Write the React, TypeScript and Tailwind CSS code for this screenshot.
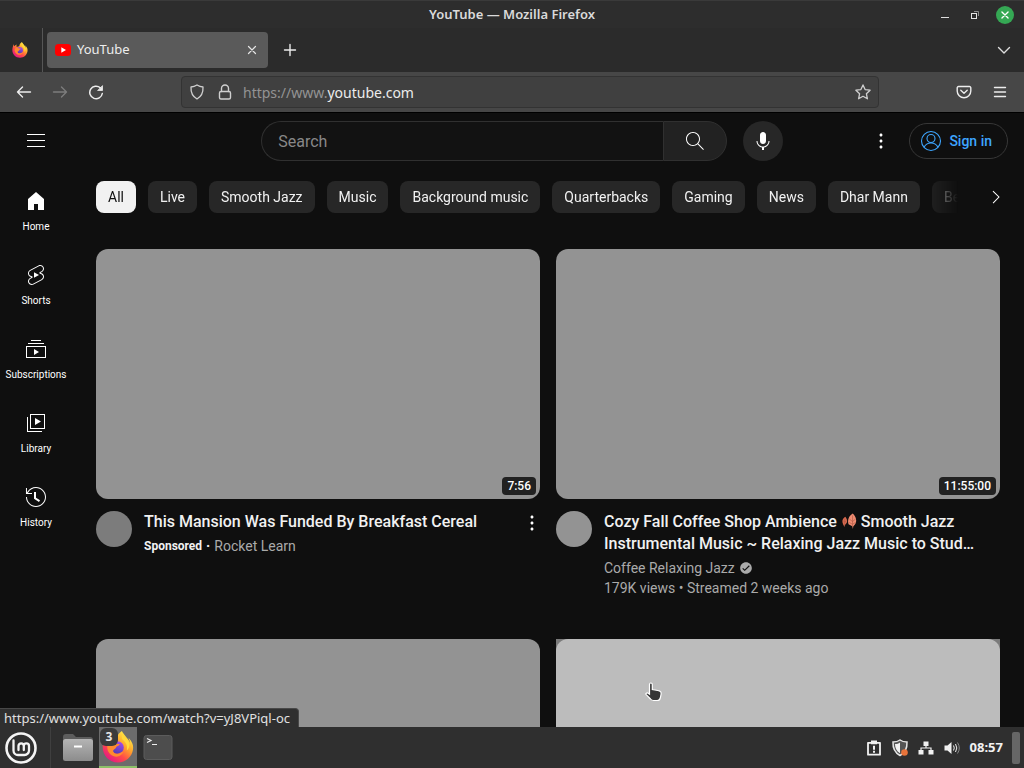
import type { ReactNode } from 'react';

const chips = ['All', 'Live', 'Smooth Jazz', 'Music', 'Background music', 'Quarterbacks', 'Gaming', 'News', 'Dhar Mann', 'Be'];

const navItems = [
  { label: 'Home', d: 'M4 21V10.08l8-6.96 8 6.96V21h-6v-6h-4v6H4z' },
  {
    label: 'Shorts',
    d: 'M10 14.65v-5.3L15 12l-5 2.65zm7.77-4.33c-.77-.32-1.2-.5-1.2-.5L18 9.06c1.84-.96 2.53-3.23 1.56-5.06s-3.24-2.53-5.07-1.56L6 6.94c-1.29.68-2.07 2.04-2 3.49.07 1.42.93 2.67 2.22 3.25.03.01 1.2.5 1.2.5L6 14.93c-1.83.97-2.53 3.24-1.56 5.07.97 1.83 3.24 2.53 5.07 1.56l8.5-4.5c1.29-.68 2.06-2.04 1.99-3.49-.07-1.42-.94-2.68-2.23-3.25zm-.23 5.86l-8.5 4.5c-1.34.71-3.01.2-3.72-1.14-.71-1.34-.2-3.01 1.14-3.72l2.04-1.08v-1.21l-.69-.28-1.11-.46c-.99-.41-1.65-1.35-1.7-2.41-.05-1.06.52-2.06 1.46-2.56l8.5-4.5c1.34-.71 3.01-.2 3.72 1.14.71 1.34.2 3.01-1.14 3.72L15.5 9.26v1.21l1.8.74c.99.41 1.65 1.35 1.7 2.41.05 1.06-.52 2.06-1.46 2.56z',
  },
  { label: 'Subscriptions', d: 'M10 18v-6l5 3-5 3zm7-15H7v1h10V3zm3 3H4v1h16V6zm2 3H2v12h20V9zM3 10h18v10H3V10z' },
  { label: 'Library', d: 'M11 7l6 3.5L11 14V7zm7 13H4V6H3v15h15v-1zm3-2H6V3h15v15zM7 17h13V4H7v13z' },
  {
    label: 'History',
    d: 'M14.97 16.95L10 13.87V7h2v5.76l4.03 2.49-1.06 1.7zM22 12c0 5.51-4.49 10-10 10S2 17.51 2 12h1c0 4.96 4.04 9 9 9s9-4.04 9-9-4.04-9-9-9C8.81 3 5.92 4.64 4.28 7.38c-.11.18-.22.37-.31.56L3.94 8H8v1H1.96V3h1v4.74c.04-.09.07-.17.11-.25.11-.22.23-.42.35-.63C5.22 3.86 8.51 2 12 2c5.51 0 10 4.49 10 10z',
  },
];

const kebab =
  'M12 16.5c.83 0 1.5.67 1.5 1.5s-.67 1.5-1.5 1.5-1.5-.67-1.5-1.5.67-1.5 1.5-1.5zM10.5 12c0 .83.67 1.5 1.5 1.5s1.5-.67 1.5-1.5-.67-1.5-1.5-1.5-1.5.67-1.5 1.5zm0-6c0 .83.67 1.5 1.5 1.5s1.5-.67 1.5-1.5-.67-1.5-1.5-1.5-1.5.67-1.5 1.5z';

function Glyph({ d, className = 'size-6' }: { d: string; className?: string }) {
  return (
    <svg viewBox="0 0 24 24" fill="currentColor" className={className} aria-hidden="true">
      <path d={d} />
    </svg>
  );
}

function Line({ children, className = 'size-4', width = 1.4 }: { children: ReactNode; className?: string; width?: number }) {
  return (
    <svg
      viewBox="0 0 16 16"
      fill="none"
      stroke="currentColor"
      strokeWidth={width}
      strokeLinecap="round"
      strokeLinejoin="round"
      className={className}
      aria-hidden="true"
    >
      {children}
    </svg>
  );
}

function FirefoxLogo({ className, id }: { className: string; id: string }) {
  return (
    <svg viewBox="0 0 32 32" className={className} aria-hidden="true">
      <defs>
        <linearGradient id={id + 'a'} x1="0.85" y1="0.1" x2="0.2" y2="0.95">
          <stop offset="0" stopColor="#fff04a" />
          <stop offset="0.35" stopColor="#ffa62b" />
          <stop offset="0.65" stopColor="#ff4b48" />
          <stop offset="1" stopColor="#e31587" />
        </linearGradient>
        <linearGradient id={id + 'b'} x1="0.7" y1="0" x2="0.3" y2="1">
          <stop offset="0" stopColor="#a64be8" />
          <stop offset="1" stopColor="#4c3bb5" />
        </linearGradient>
      </defs>
      <path
        d="M29.6 11.1c-.7-1.7-2.1-3.5-3.2-4.1.9 1.8 1.4 3.5 1.6 4.8C26.200 7.300 23.100 5.500 20.700 1.600 20.200.8 20 .2 19.900 0c-3.800 2.200-5.200 6.300-5.300 8.300-1.800.1-3.500.8-4.900 1.900-.7-.8-1-3-.3-5.200-2 .9-3.600 2.400-4.700 3.700-.8-1-.7-4.200-.7-4.200C3.300 5 .9 9.400.7 15.500.5 24.500 7.300 31.500 16 31.500c7.800 0 13.900-5.600 15-13 .4-2.600 0-5.200-1.400-7.400z"
        fill={'url(#' + id + 'a)'}
      />
      <circle cx="15.500" cy="16.500" r="6.300" fill={'url(#' + id + 'b)'} />
      <path
        d="M5.500 14c2.500-3 5-3.300 7.500-1.700 1.600.9 3.300.6 4.500.8.500 1.600-2.900 2-3.300 3.200-.4 1.800-2.500 1.900-3 3.200-.4 1.900 2.300 3.700 4.600 3.200 2.600-.5 4-2.100 5.700-1.900-1.600 4.100-6.300 6.100-10.300 4.200C7 23.100 4.500 19 5.500 14z"
        fill="#ff8a2e"
      />
      <path d="M20.500 8.500c3.800 2.800 5.400 7 4.300 11 2.100-1.500 3-4.500 2.400-7.500-1-3.500-4.300-6-6.700-9.500-1 2-.9 4.300 0 6z" fill="#ffd93b" />
    </svg>
  );
}

function FallenLeaves() {
  return (
    <svg viewBox="0 0 17 18" className="inline-block h-[18px] w-4 align-[-3px]" role="img" aria-label="fallen leaves">
      <path d="M4.500 4.500C1.500 6.500.7 9 2.200 12.500l1.500 3 .4-2.500C7 11.500 7.600 8 4.500 4.500z" fill="#d9694e" />
      <path d="M12.500 1C8.500 3.500 6.500 7.500 8 12.500l4 2 .6 3 .5-3C17 12 17.500 5.500 12.500 1z" fill="#ef8c72" />
      <path d="M12.300 3v12M9 7l3.200 2.500L15.500 7M8.800 10.500l3.400 2 3.300-2M4 6.500v7M2.300 8.500 4 10.200l1.600-1.500" stroke="#a95441" strokeWidth=".6" fill="none" />
    </svg>
  );
}

function TitleBar() {
  return (
    <header className="grid h-7 shrink-0 grid-cols-[1fr_auto_1fr] items-center border-t border-[#3a3a3a] bg-[#2d2d2d]">
      <h1 className="col-start-2 text-[13px] font-semibold text-[#dadada]">YouTube — Mozilla Firefox</h1>
      <div className="flex items-center justify-end gap-3 pr-[10px]">
        <button aria-label="Minimize" className="grid size-[18px] place-items-center">
          <svg viewBox="0 0 18 18" className="size-[18px]" aria-hidden="true"><path d="M5 11.500h8" stroke="#ddd" /></svg>
        </button>
        <button aria-label="Restore" className="grid size-[18px] place-items-center">
          <svg viewBox="0 0 18 18" fill="none" className="size-[18px]" aria-hidden="true">
            <rect x="5.500" y="7.500" width="5" height="5" stroke="#e4e4e4" />
            <path d="M8 5.500h4.500V10" stroke="#8b8b8b" />
          </svg>
        </button>
        <button aria-label="Close window" className="grid size-[18px] place-items-center rounded-full bg-[#35a854] text-white">
          <Line className="size-[14px]" width={1.5}><path d="M4.500 4.500l7 7M11.500 4.500l-7 7" /></Line>
        </button>
      </div>
    </header>
  );
}

function TabStrip() {
  return (
    <div className="flex h-11 shrink-0 items-center bg-[#2b2b2b] pr-3">
      <button aria-label="Firefox View" className="grid w-[42px] place-items-center pr-[2px]">
        <FirefoxLogo className="size-4" id="view" />
      </button>
      <div className="h-full border-l border-[#565656]" />
      <div className="ml-1 flex h-9 w-[221px] items-center gap-[6px] rounded bg-[#5a5a5a] px-2">
        <svg viewBox="0 0 16 16" className="size-4" aria-hidden="true">
          <rect x="0" y="2" width="16" height="12" rx="3.500" fill="#f00" />
          <path d="M6.300 5.300v5.400L11 8z" fill="#fff" />
        </svg>
        <span className="flex-1 text-[13px] text-[#ededed]">YouTube</span>
        <button aria-label="Close tab" className="text-[#e4e4e4]">
          <Line width={1.2}><path d="M4.500 4.500l7 7M11.500 4.500l-7 7" /></Line>
        </button>
      </div>
      <button aria-label="New tab" className="ml-[14px] text-[#ececec]">
        <Line width={1.4}><path d="M8 2.500v11M2.500 8h11" /></Line>
      </button>
      <button aria-label="List all tabs" className="ml-auto text-[#dedede]">
        <Line width={1.4}><path d="M2.500 5.500L8 11l5.500-5.500" /></Line>
      </button>
    </div>
  );
}

function NavBar() {
  return (
    <div className="flex h-10 shrink-0 items-center bg-[#474747] px-4 text-[#ededed]">
      <div className="flex w-[165px] shrink-0 gap-5">
        <button aria-label="Back"><Line><path d="M14.500 8h-13M6.500 3L1.500 8l5 5" /></Line></button>
        <button aria-label="Forward" className="text-[#7d7d7d]"><Line><path d="M1.500 8h13M9.500 3l5 5-5 5" /></Line></button>
        <button aria-label="Reload">
          <Line width={1.5}><path d="M14.300 9.500A6.300 6.300 0 1 1 12.300 3.800" /><path d="M14.500 2v4.500H10z" fill="currentColor" strokeWidth="0.800" /></Line>
        </button>
      </div>
      <div className="flex h-8 min-w-0 flex-1 items-center rounded border border-[#333] bg-[#404040] px-[7px] text-[#cfcfcf]">
        <Line width={1.3}><path d="M8 1c2 1.300 4 1.900 6 2 .3 5.300-1.600 9.500-6 12C3.600 12.500 1.700 8.300 2 3c2-.1 4-.7 6-2z" /></Line>
        <span className="ml-3">
          <Line width={1.4}><rect x="2.500" y="7.500" width="11" height="7.500" rx="1.500" /><path d="M4.500 7.500V4.500a3.500 3.500 0 0 1 7 0v3" /></Line>
        </span>
        <label htmlFor="address" className="ml-[10px] text-[14px] text-[#939393]">https://www.</label>
        <input id="address" aria-label="Address" defaultValue="youtube.com" className="min-w-0 flex-1 bg-transparent text-[14px] text-[#ececec] outline-none" />
        <button aria-label="Bookmark this page">
          <Line width={1.3}><path d="M8 .9l2.100 4.700 5 .6-3.700 3.500 1 5.100L8 12.300l-4.400 2.500 1-5.100L.9 6.200l5-.6z" /></Line>
        </button>
      </div>
      <div className="ml-[77px] flex gap-5">
        <button aria-label="Save to Pocket">
          <Line width={1.4}><path d="M2.500 2.500h11a1.300 1.300 0 0 1 1.300 1.300V7a6.800 6.800 0 0 1-13.600 0V3.800a1.300 1.300 0 0 1 1.300-1.300z" /><path d="M4.800 6.200L8 9.200l3.200-3" /></Line>
        </button>
        <button aria-label="Open application menu">
          <Line width={1.4}><path d="M2.500 3.500h11M2.500 8h11M2.500 12.500h11" /></Line>
        </button>
      </div>
    </div>
  );
}

function Masthead() {
  return (
    <div className="flex h-14 shrink-0 items-center justify-between px-4">
      <div className="w-[167px] shrink-0">
        <button aria-label="Guide" className="grid size-10 place-items-center">
          <Glyph d="M21 6H3V5h18v1zm0 5H3v1h18v-1zm0 6H3v1h18v-1z" />
        </button>
      </div>
      <div className="flex min-w-0 flex-[0_1_522px] items-center gap-4">
        <form className="flex h-10 min-w-0 flex-1" onSubmit={(e) => e.preventDefault()}>
          <input type="text" aria-label="Search" placeholder="Search" className="min-w-0 flex-1 rounded-l-full border border-r-0 border-[#303030] bg-[#121212] px-4 pt-px text-base text-white outline-none placeholder:text-[#888]" />
          <button aria-label="Submit search" className="grid w-16 place-items-center rounded-r-full border border-[#303030] bg-[#222]">
            <Glyph d="M20.870 20.170l-5.590-5.590C16.350 13.350 17 11.750 17 10c0-3.870-3.130-7-7-7s-7 3.130-7 7 3.130 7 7 7c1.750 0 3.350-.65 4.580-1.710l5.590 5.590.7-.71zM10 16c-3.310 0-6-2.690-6-6s2.690-6 6-6 6 2.690 6 6-2.690 6-6 6z" />
          </button>
        </form>
        <button aria-label="Search with your voice" className="grid size-10 place-items-center rounded-full bg-[#272727]">
          <Glyph d="M12 3C10.340 3 9 4.370 9 6.070v5.860C9 13.630 10.340 15 12 15s3-1.370 3-3.070V6.070C15 4.370 13.660 3 12 3zM18.500 12h-1c0 3.030-2.470 5.500-5.500 5.500S6.500 15.030 6.500 12h-1c0 3.240 2.390 5.930 5.500 6.410V21h2v-2.590c3.110-.48 5.500-3.170 5.500-6.410z" />
        </button>
      </div>
      <div className="flex shrink-0 items-center gap-2">
        <button aria-label="Settings" className="grid size-10 place-items-center"><Glyph d={kebab} /></button>
        <a href="#signin" className="flex h-9 items-center gap-[6px] rounded-full border border-[#373737] pr-[15px] pl-[9px] text-sm font-medium text-[#3ea6ff]">
          <svg viewBox="0 0 24 24" fill="none" stroke="currentColor" strokeWidth="1.100" className="size-6" aria-hidden="true">
            <circle cx="12" cy="12" r="9.500" />
            <circle cx="12" cy="9.500" r="4" />
            <path d="M5 18.500c1.300-3 4-4.500 7-4.500s5.700 1.500 7 4.500" />
          </svg>
          Sign in
        </a>
      </div>
    </div>
  );
}

function ChipBar() {
  return (
    <div className="flex h-14 shrink-0 items-center pr-3">
      <div className="flex min-w-0 flex-1 gap-3 overflow-hidden [mask-image:linear-gradient(to_right,#000_calc(100%-40px),transparent_calc(100%-2px))]">
        {chips.map((chip, i) => (
          <button
            key={chip}
            className={
              i === 0
                ? 'h-8 shrink-0 rounded-lg bg-[#f1f1f1] px-3 text-sm text-[#0f0f0f]'
                : 'h-8 shrink-0 rounded-lg bg-[#272727] px-3 text-sm text-[#f1f1f1]'
            }
          >
            {chip}
          </button>
        ))}
      </div>
      <button aria-label="Next" className="ml-5 grid size-8 place-items-center">
        <Glyph d="M9.400 18.400l-.7-.7 5.600-5.600-5.700-5.700.7-.7 6.400 6.400-6.300 6.300z" />
      </button>
    </div>
  );
}

function Thumb({ time }: { time: string }) {
  return (
    <a href="#watch" className="flex aspect-video items-end justify-end rounded-xl bg-[#939393] p-1">
      <span className="rounded bg-[#212121] px-[5px] py-px text-xs leading-4 font-medium text-white">{time}</span>
    </a>
  );
}

function Feed() {
  return (
    <div className="grid grid-cols-2 gap-x-4 gap-y-[41px] pt-6 pr-6">
      <article>
        <Thumb time="7:56" />
        <div className="flex pt-3">
          <div className="mr-3 size-9 shrink-0 rounded-full bg-[#7c7c7c]" />
          <div className="min-w-0 flex-1">
            <h3 className="text-base leading-[22px] font-medium text-[#f1f1f1]">This Mansion Was Funded By Breakfast Cereal</h3>
            <p className="mt-[3px] flex items-center gap-1 text-sm leading-5 text-[#aaa]">
              <span className="text-xs leading-5 font-bold text-[#f1f1f1]">Sponsored</span>
              <span className="font-bold text-[#f1f1f1]">·</span>
              <span>Rocket Learn</span>
            </p>
          </div>
          <button aria-label="Action menu" className="-mr-1 h-6 w-6"><Glyph d={kebab} /></button>
        </div>
      </article>
      <article>
        <Thumb time="11:55:00" />
        <div className="flex pt-3">
          <div className="mr-3 size-9 shrink-0 rounded-full bg-[#939393]" />
          <div className="min-w-0 flex-1 pr-6">
            <h3 className="text-base leading-[22px] font-medium text-[#f1f1f1]">
              Cozy Fall Coffee Shop Ambience <FallenLeaves /> Smooth Jazz Instrumental Music ~ Relaxing Jazz Music to Stud…
            </h3>
            <p className="mt-[3px] flex items-center gap-1 text-sm leading-5 text-[#aaa]">
              Coffee Relaxing Jazz
              <Glyph className="size-[14px]" d="M12 2C6.500 2 2 6.500 2 12s4.500 10 10 10 10-4.500 10-10S17.500 2 12 2zM9.800 17.300l-4.200-4.100L7 11.800l2.800 2.700L17 7.400l1.400 1.400-8.600 8.500z" />
            </p>
            <p className="text-sm leading-5 text-[#aaa]">179K views • Streamed 2 weeks ago</p>
          </div>
        </div>
      </article>
      <a href="#watch" aria-label="Video" className="aspect-video rounded-xl bg-[#939393]" />
      <a href="#watch" aria-label="Video" className="aspect-video bg-[#7b7b7b]">
        <span className="block h-full rounded-xl bg-[#bcbcbc]" />
      </a>
    </div>
  );
}

function Page() {
  return (
    <main className="relative flex min-h-0 flex-1 flex-col overflow-hidden border-t border-black bg-[#0f0f0f] font-['Roboto',sans-serif] text-white">
      <Masthead />
      <div className="flex min-h-0 flex-1">
        <nav className="flex w-24 shrink-0 flex-col pt-1">
          {navItems.map((item) => (
            <a key={item.label} href={'#' + item.label} className="flex h-[74px] w-[72px] flex-col items-center gap-[7px] pt-4 text-[10px] leading-[14px]">
              <Glyph d={item.d} />
              {item.label}
            </a>
          ))}
        </nav>
        <div className="flex min-w-0 flex-1 flex-col">
          <ChipBar />
          <Feed />
        </div>
      </div>
      <div className="absolute bottom-0 left-0 rounded-tr border-t border-r border-[#484848] bg-[#2f2f2f] pr-2 pl-1 font-['Noto_Sans',sans-serif] text-[13px] leading-[18px] text-[#e0e0e0]">
        https://www.youtube.com/watch?v=yJ8VPiql-oc
      </div>
      <svg viewBox="0 0 18 20" className="absolute top-[569px] left-[645px] h-5 w-[18px]" aria-hidden="true">
        <path
          d="M4.500 2.500c0-2 2.800-2 2.800 0v5l5.500 1c2.500.4 3.700 1.500 3.200 4l-.7 3.500c-.4 1.700-1.300 2.500-3 2.500H8.500c-1.400 0-2.200-.5-3-1.500L1.200 12.700c-.9-1.200.6-2.400 1.900-1.500l1.400 1z"
          fill="#353535"
          stroke="#fff"
          strokeWidth="1.200"
        />
      </svg>
    </main>
  );
}

function Taskbar() {
  return (
    <footer className="flex h-[41px] shrink-0 items-center bg-[#2f2f2f] pr-1">
      <button aria-label="Menu" className="ml-1">
        <svg viewBox="0 0 34 34" fill="none" stroke="#f4f4f4" className="size-[34px]" aria-hidden="true">
          <circle cx="17" cy="17" r="14.500" strokeWidth="2.600" />
          <path d="M9.500 9.500v10a4.500 4.500 0 0 0 4.500 4.500h6.500a4.500 4.500 0 0 0 4.500-4.500V15a2.600 2.600 0 0 0-5.200 0v4M19.800 15a2.600 2.600 0 0 0-5.300 0v4" strokeWidth="2.300" strokeLinecap="round" />
        </svg>
      </button>
      <div className="ml-3 h-full border-l border-[#3f3f3f]" />
      <button aria-label="Files" className="ml-[11px]">
        <svg viewBox="0 0 32 30" className="size-8" aria-hidden="true">
          <defs>
            <linearGradient id="folder" x1="0" y1="0" x2="0" y2="1"><stop offset="0" stopColor="#b4b4b4" /><stop offset="1" stopColor="#8c8c8c" /></linearGradient>
          </defs>
          <path d="M1 4a3 3 0 0 1 3-3h7l3 3h14a3 3 0 0 1 3 3v9H1z" fill="#5d5d5d" />
          <rect x="1" y="6" width="30" height="22" rx="2.500" fill="url(#folder)" />
          <path d="M12 12.500h8v2h-8z" fill="#fff" />
        </svg>
      </button>
      <button aria-label="Firefox, 3 windows" className="relative ml-[5px] grid h-full w-[38px] place-items-center border-b-2 border-[#8cc068] bg-[#6c6c6c]">
        <FirefoxLogo className="size-8" id="task" />
        <span className="absolute top-px left-px grid size-[18px] place-items-center rounded-md bg-[#3b3b3b] text-[12px] font-bold text-[#e6e6e6]">3</span>
      </button>
      <button aria-label="Terminal" className="ml-[6px]">
        <svg viewBox="0 0 30 28" fill="none" className="h-7 w-[30px]" aria-hidden="true">
          <rect x="1" y="1.500" width="28" height="24" rx="2.500" fill="#4d4d4d" stroke="#5c5c5c" />
          <path d="M4 4.500l4 2-4 2M9 10.500h5" stroke="#eee" strokeWidth="1.200" />
        </svg>
      </button>
      <div className="ml-auto flex items-center gap-[9px] text-[#f1f1f1]">
        <svg viewBox="0 0 16 16" className="size-4" aria-hidden="true">
          <path d="M2 2.800h12v11.900H2z" fill="none" stroke="currentColor" strokeWidth="1.800" strokeLinejoin="round" />
          <path d="M5 .5h6v3.800H5zM7 5.800h2v4H7zM7 10.800h2v2H7z" fill="currentColor" />
        </svg>
        <svg viewBox="0 0 18 18" className="size-[18px]" aria-hidden="true">
          <path d="M9 1c2 1.500 4.500 2 7 2 .3 6-1.500 10.500-7 13.500C3.500 13.500 1.700 9 2 3c2.500 0 5-.5 7-2z" fill="#555" stroke="#e6e6e6" strokeWidth="1.500" />
          <path d="M9 3.500v10.800C5.500 12 4 9 4 5c2 0 3.500-.5 5-1.500z" fill="#f1f1f1" />
          <circle cx="13.500" cy="13.500" r="3.300" fill="#e8743b" />
        </svg>
        <svg viewBox="0 0 16 16" className="size-4" aria-hidden="true">
          <path d="M5.500 1.500h5v4.500h-5zM.5 10h5v4.500h-5zM10.500 10h5v4.500h-5z" fill="currentColor" />
          <path d="M8 5v3M3 11V8h10v3" fill="none" stroke="currentColor" strokeWidth="1.200" />
        </svg>
        <svg viewBox="0 0 18 16" className="h-4 w-[18px]" aria-hidden="true">
          <path d="M1.500 5.500h3l4-3.500v12l-4-3.500h-3z" fill="currentColor" />
          <path d="M10.500 5.500q1.500 2.500 0 5M12.500 4q2.600 4 0 8" fill="none" stroke="currentColor" />
          <path d="M14.500 2.500q3.600 5.500 0 11" fill="none" stroke="#888" />
        </svg>
        <time className="text-[13px] font-bold">08:57</time>
        <div className="h-8 w-2 rounded-xs bg-[#666]" />
      </div>
    </footer>
  );
}

export default function App() {
  return (
    <div className="flex h-screen flex-col overflow-hidden bg-[#2d2d2d] font-['Noto_Sans',sans-serif]">
      <TitleBar />
      <TabStrip />
      <NavBar />
      <Page />
      <Taskbar />
    </div>
  );
}
